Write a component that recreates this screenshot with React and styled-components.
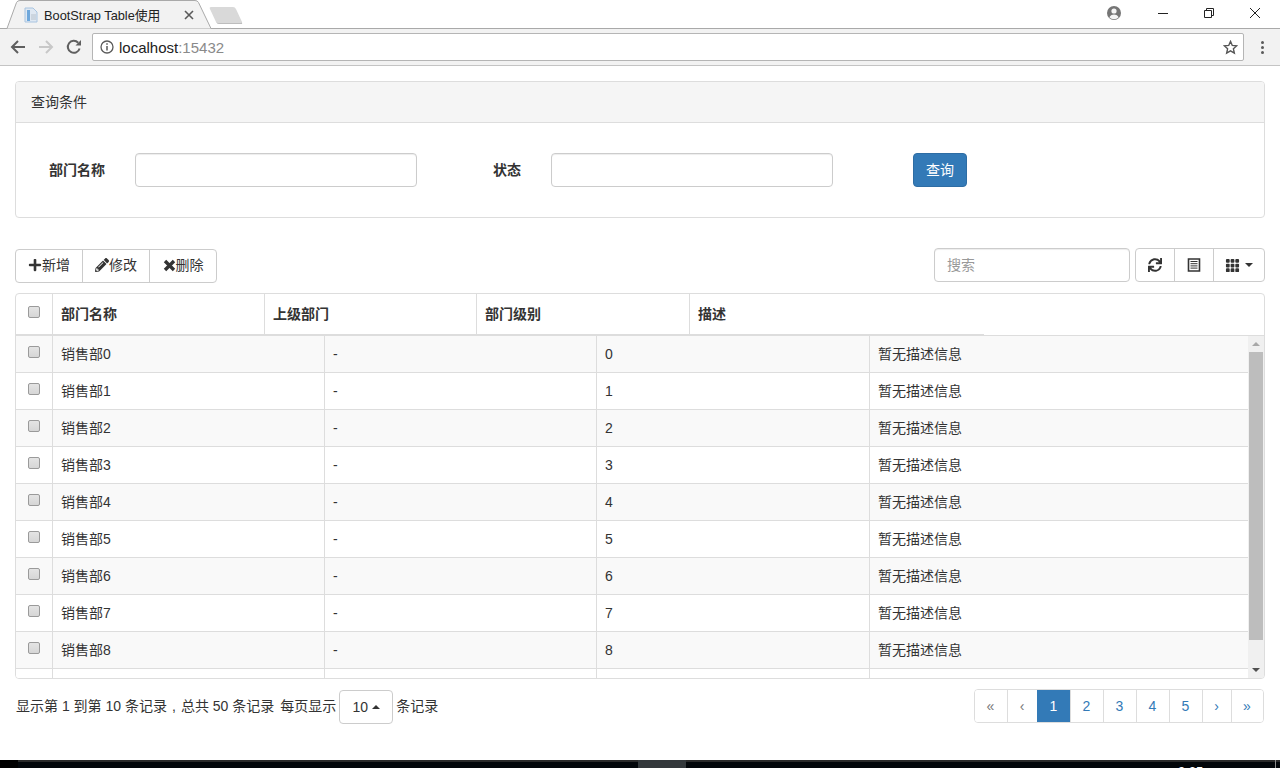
import styled, { createGlobalStyle } from "styled-components";
import { FaPlus, FaPencilAlt, FaSync } from "react-icons/fa";
import { BsGrid3X3GapFill } from "react-icons/bs";

const rows = [0, 1, 2, 3, 4, 5, 6, 7, 8];
const pages = [
  { label: "«", width: 32, disabled: true },
  { label: "‹", width: 30, disabled: true },
  { label: "1", width: 33, active: true },
  { label: "2", width: 33 },
  { label: "3", width: 33 },
  { label: "4", width: 33 },
  { label: "5", width: 33 },
  { label: "›", width: 29 },
  { label: "»", width: 32 },
];

export default function App() {
  return (
    <Screen>
      <GlobalStyle />
      <TabStrip>
        <Tab>
          <TabShape viewBox="0 0 206 29" preserveAspectRatio="none">
            <path d="M0 28.5 H2 L11.500 2.500 Q12.500 .5 15 .5 H190 Q192.500 .5 193.500 2.500 L206 28.5" fill="#f2f2f2" stroke="#a9a9a9" />
          </TabShape>
          <svg width="16" height="16" viewBox="0 0 16 16">
            <path d="M2 1h8l4 4v10H2z" fill="#dfe8f2" stroke="#a8c4e0" />
            <path d="M4 3h3v11H4z" fill="#6fa8dc" />
            <path d="M8 8h5M8 10h5M8 12h5" stroke="#b8c2cc" />
          </svg>
          <TabTitle>BootStrap Table使用</TabTitle>
          <svg width="10" height="10" viewBox="0 0 10 10">
            <path d="M1 1l8 8M9 1l-8 8" stroke="#5a5a5a" strokeWidth="1.6" />
          </svg>
        </Tab>
        <NewTab />
        <Spacer />
        <WindowControls>
          <svg width="16" height="16" viewBox="0 0 16 16">
            <circle cx="8" cy="8" r="7" fill="#757575" />
            <circle cx="8" cy="6" r="2.6" fill="#f5f5f5" />
            <path d="M3.4 12.2c1-2 3-2.7 4.6-2.7s3.6.7 4.6 2.7c-1.1 1.3-2.8 2-4.6 2s-3.500-.7-4.600-2z" fill="#f5f5f5" />
          </svg>
          <WindowButton>
            <svg width="10" height="10" viewBox="0 0 10 10"><path d="M0 5.500h10" stroke="#222" /></svg>
          </WindowButton>
          <WindowButton>
            <svg width="10" height="10" viewBox="0 0 10 10">
              <path d="M.5 2.500h7v7h-7zM2.500 2.500v-2h7v7h-2" fill="none" stroke="#222" />
            </svg>
          </WindowButton>
          <WindowButton>
            <svg width="10" height="10" viewBox="0 0 10 10"><path d="M0 0l10 10M10 0L0 10" stroke="#222" /></svg>
          </WindowButton>
        </WindowControls>
      </TabStrip>

      <AddressBar>
        <NavIcon>
          <svg width="16" height="16" viewBox="0 0 16 16">
            <path d="M15 8H2M8 2L2 8l6 6" fill="none" stroke="#5f5f5f" strokeWidth="2" />
          </svg>
        </NavIcon>
        <NavIcon>
          <svg width="16" height="16" viewBox="0 0 16 16">
            <path d="M1 8h13M8 2l6 6-6 6" fill="none" stroke="#c8c8c8" strokeWidth="2" />
          </svg>
        </NavIcon>
        <NavIcon>
          <svg width="16" height="16" viewBox="0 0 16 16">
            <path d="M13.600 9.500A6 6 0 1 1 12.200 3.700" fill="none" stroke="#5f5f5f" strokeWidth="2" />
            <path d="M9.500 6.500H15V1z" fill="#5f5f5f" />
          </svg>
        </NavIcon>
        <Omnibox>
          <svg width="14" height="14" viewBox="0 0 14 14">
            <circle cx="7" cy="7" r="6" fill="none" stroke="#5a5a5a" strokeWidth="1.300" />
            <path d="M7 6v4.500M7 3.200v1.600" stroke="#5a5a5a" strokeWidth="1.500" />
          </svg>
          <Url>
            localhost<UrlPort>:15432</UrlPort>
          </Url>
          <Spacer />
          <svg width="15" height="15" viewBox="0 0 16 16">
            <path d="M8 1.500l1.900 4.300 4.600.5-3.400 3.100 1 4.600L8 11.600l-4.100 2.400 1-4.600L1.500 6.300l4.600-.5z" fill="none" stroke="#555" strokeWidth="1.500" />
          </svg>
        </Omnibox>
        <MenuDots>
          <i />
          <i />
          <i />
        </MenuDots>
      </AddressBar>

      <Page>
        <Panel>
          <PanelHeading>查询条件</PanelHeading>
          <QueryForm>
            <Field>
              <FieldLabel $width={56}>部门名称</FieldLabel>
              <TextInput />
            </Field>
            <Field>
              <FieldLabel $width={28}>状态</FieldLabel>
              <TextInput />
            </Field>
            <QueryButton>查询</QueryButton>
          </QueryForm>
        </Panel>

        <Toolbar>
          <ActionGroup>
            <ToolButton $width={66}>
              <FaPlus size={14} />
              <ToolLabel>新增</ToolLabel>
            </ToolButton>
            <ToolButton $width={67}>
              <FaPencilAlt size={14} />
              <ToolLabel>修改</ToolLabel>
            </ToolButton>
            <ToolButton $width={67}>
              <svg width="13" height="13" viewBox="0 0 13 13">
                <path d="M2 2l9 9M11 2l-9 9" stroke="#333" strokeWidth="3.400" />
              </svg>
              <ToolLabel>删除</ToolLabel>
            </ToolButton>
          </ActionGroup>
          <ToolbarRight>
            <SearchInput placeholder="搜索" />
            <ButtonGroup>
              <ToolButton $width={38}><FaSync size={14} /></ToolButton>
              <ToolButton $width={39}>
                <svg width="14" height="14" viewBox="0 0 14 14">
                  <path d="M1.500 1h11v12h-11z" fill="none" stroke="#333" strokeWidth="1.600" />
                  <path d="M3.500 3.500h7M3.500 5.700h7M3.500 7.900h7M3.500 10.100h7" stroke="#333" />
                </svg>
              </ToolButton>
              <ToolButton $width={51}>
                <BsGrid3X3GapFill size={15} />
                <Caret />
              </ToolButton>
            </ButtonGroup>
          </ToolbarRight>
        </Toolbar>

        <TableBox>
          <HeadRow>
            <HeadCell $center><CheckBox type="checkbox" /></HeadCell>
            <HeadCell>部门名称</HeadCell>
            <HeadCell>上级部门</HeadCell>
            <HeadCell>部门级别</HeadCell>
            <HeadCell $last>描述</HeadCell>
          </HeadRow>
          <BodyWrap>
            <Rows>
              {rows.map((n) => (
                <Row key={n} $odd={n % 2 === 0}>
                  <Cell $center><CheckBox type="checkbox" /></Cell>
                  <Cell $cjk>销售部{n}</Cell>
                  <Cell>-</Cell>
                  <Cell>{n}</Cell>
                  <Cell $cjk $last>暂无描述信息</Cell>
                </Row>
              ))}
              {/* next row, scrolled out of view except its top edge */}
              <Row>
                <Cell />
                <Cell />
                <Cell />
                <Cell />
                <Cell $last />
              </Row>
            </Rows>
            <ScrollBar>
              <ScrollArrow $up />
              <ScrollThumb />
              <ScrollArrow />
            </ScrollBar>
          </BodyWrap>
        </TableBox>

        <Footer>
          <PageInfo>
            <InfoText>
              显示第 1 到第 10 条记录<Comma>,</Comma>总共 50 条记录
            </InfoText>
            <InfoText $gap={6}>每页显示</InfoText>
            <PageSize>10<CaretUp /></PageSize>
            <InfoText>条记录</InfoText>
          </PageInfo>
          <Pagination>
            {pages.map((p) => (
              <PageLink key={p.label} $width={p.width} $active={p.active} $disabled={p.disabled}>
                {p.label}
              </PageLink>
            ))}
          </Pagination>
        </Footer>
      </Page>

      <Taskbar>
        <TaskCorner />
        <TaskSlot />
        <TaskClock>9:25</TaskClock>
        <TaskEdge />
      </Taskbar>
    </Screen>
  );
}

const GlobalStyle = createGlobalStyle`
  html, body {
    margin: 0;
    height: 100%;
    overflow: hidden;
    background: #fff;
  }
  * {
    box-sizing: border-box;
  }
  body {
    font-family: "Liberation Sans", "Noto Sans CJK SC", sans-serif;
    font-size: 14px;
    color: #333;
  }
`;

const Screen = styled.div`
  display: flex;
  flex-direction: column;
  height: 768px;
  overflow: hidden;
`;

const Spacer = styled.div`
  flex: 1;
`;

const TabStrip = styled.div`
  display: flex;
  align-items: flex-end;
  height: 29px;
  padding-left: 5px;
  background: #fff;
  border-bottom: 1px solid #a9a9a9;
`;

const Tab = styled.div`
  position: relative;
  display: flex;
  align-items: center;
  gap: 5px;
  width: 206px;
  height: 29px;
  margin-bottom: -1px;
  padding: 0 17px 0 18px;
  svg {
    position: relative;
    flex: none;
  }
`;

const TabShape = styled.svg`
  position: absolute !important;
  left: 0;
  top: 0;
  width: 206px;
  height: 29px;
`;

const TabTitle = styled.span`
  position: relative;
  flex: 1;
  font-size: 12.8px;
  color: #222;
  white-space: nowrap;
`;

const NewTab = styled.div`
  width: 26px;
  height: 17px;
  margin: 0 0 4px 2px;
  background: #d9d9d9;
  border-bottom: 1px solid #bdbdbd;
  border-radius: 2px;
  transform: skewX(25deg);
`;

const WindowControls = styled.div`
  display: flex;
  align-items: center;
  align-self: flex-start;
  height: 26px;
  padding-right: 2px;
`;

const WindowButton = styled.div`
  display: flex;
  align-items: center;
  justify-content: center;
  width: 46px;
  &:first-of-type {
    margin-left: 18px;
  }
`;

const AddressBar = styled.div`
  display: flex;
  align-items: center;
  height: 37px;
  padding: 0 10px;
  background: #f2f2f2;
  border-bottom: 1px solid #c4c4c4;
`;

const NavIcon = styled.div`
  display: flex;
  justify-content: center;
  width: 16px;
  margin-right: 12px;
  &:nth-child(3) {
    margin-right: 10px;
  }
`;

const Omnibox = styled.div`
  display: flex;
  align-items: center;
  gap: 5px;
  width: 1152px;
  height: 28px;
  padding: 0 5px 0 7px;
  background: #fff;
  border: 1px solid #b5b5b5;
  border-radius: 2px;
`;

const Url = styled.span`
  font-size: 15px;
  color: #222;
`;

const UrlPort = styled.span`
  color: #8a8a8a;
`;

const MenuDots = styled.div`
  display: flex;
  flex-direction: column;
  gap: 2px;
  margin-left: 17px;
  i {
    width: 3px;
    height: 3px;
    background: #5a5a5a;
    border-radius: 50%;
  }
`;

const Page = styled.div`
  flex: 1;
  min-height: 0;
  padding: 15px 15px 0;
`;

const Panel = styled.div`
  height: 137px;
  background: #fff;
  border: 1px solid #ddd;
  border-radius: 4px;
`;

const PanelHeading = styled.div`
  display: flex;
  align-items: center;
  height: 41px;
  padding: 0 15px 2px;
  background: #f5f5f5;
  border-bottom: 1px solid #ddd;
  border-radius: 3px 3px 0 0;
`;

const QueryForm = styled.div`
  display: flex;
  align-items: center;
  gap: 76px;
  padding: 30px 0 0 33px;
`;

const Field = styled.div`
  display: flex;
  align-items: center;
  gap: 30px;
`;

const FieldLabel = styled.label`
  width: ${(p) => p.$width}px;
  padding-bottom: 2px;
  font-weight: 700;
  white-space: nowrap;
`;

const TextInput = styled.input`
  width: 282px;
  height: 34px;
  padding: 6px 12px;
  background: #fff;
  border: 1px solid #ccc;
  border-radius: 4px;
  box-shadow: inset 0 1px 1px rgba(0, 0, 0, 0.075);
`;

const QueryButton = styled.button`
  width: 54px;
  height: 34px;
  margin-left: 4px;
  padding: 0 0 2px;
  font: inherit;
  color: #fff;
  background: #337ab7;
  border: 1px solid #2e6da4;
  border-radius: 4px;
`;

const Toolbar = styled.div`
  display: flex;
  align-items: flex-start;
  justify-content: space-between;
  height: 44px;
  margin-top: 31px;
`;

const ToolbarRight = styled.div`
  display: flex;
  gap: 5px;
  margin-top: -1px;
`;

const ButtonGroup = styled.div`
  display: flex;
  height: 34px;
  background: #fff;
  border: 1px solid #ccc;
  border-radius: 4px;
`;

const ActionGroup = styled(ButtonGroup)`
  padding: 0;
  & > div {
    padding-bottom: 2px;
  }
`;

const ToolButton = styled.div`
  display: flex;
  align-items: center;
  justify-content: center;
  width: ${(p) => p.$width}px;
  height: 100%;
  color: #333;
  border-left: 1px solid #ccc;
  &:first-child {
    border-left: 0;
  }
`;

const ToolLabel = styled.span`
  margin-bottom: 2px;
`;

const Caret = styled.span`
  width: 0;
  height: 0;
  margin-left: 5px;
  border-top: 4px solid #333;
  border-left: 4px solid transparent;
  border-right: 4px solid transparent;
`;

const CaretUp = styled.span`
  display: inline-block;
  width: 0;
  height: 0;
  margin-left: 4px;
  vertical-align: 2px;
  border-bottom: 4px solid #333;
  border-left: 4px solid transparent;
  border-right: 4px solid transparent;
`;

const SearchInput = styled.input`
  width: 196px;
  height: 34px;
  padding: 6px 12px;
  font: inherit;
  background: #fff;
  border: 1px solid #ccc;
  border-radius: 4px;
  box-shadow: inset 0 1px 1px rgba(0, 0, 0, 0.075);
  &::placeholder {
    color: #999;
  }
`;

const TableBox = styled.div`
  height: 386px;
  overflow: hidden;
  background: #fff;
  border: 1px solid #ddd;
  border-radius: 4px;
`;

const HeadRow = styled.div`
  display: grid;
  grid-template-columns: 37px 212px 212px 213px 294px;
  width: 968px;
  height: 41px;
  border-bottom: 1px solid #ddd;
`;

const HeadCell = styled.div`
  display: flex;
  align-items: center;
  justify-content: ${(p) => (p.$center ? "center" : "flex-start")};
  padding: ${(p) => (p.$center ? "0" : "0 8px 2px")};
  font-weight: 700;
  border-right: ${(p) => (p.$last ? "0" : "1px solid #ddd")};
`;

const BodyWrap = styled.div`
  display: flex;
  height: 343px;
  border-top: 1px solid #ddd;
`;

const Rows = styled.div`
  flex: 1;
  min-width: 0;
  overflow: hidden;
`;

const Row = styled.div`
  display: grid;
  grid-template-columns: 37px 272px 272px 273px 378px;
  height: 37px;
  background: ${(p) => (p.$odd ? "#f9f9f9" : "#fff")};
  border-bottom: 1px solid #ddd;
`;

const Cell = styled.div`
  display: flex;
  align-items: center;
  justify-content: ${(p) => (p.$center ? "center" : "flex-start")};
  padding: ${(p) => (p.$center ? "0" : p.$cjk ? "0 8px 2px" : "0 8px")};
  border-right: ${(p) => (p.$last ? "0" : "1px solid #ddd")};
`;

const CheckBox = styled.input`
  appearance: none;
  width: 12px;
  height: 12px;
  margin: 0 0 4px;
  background: linear-gradient(#e4e4e4, #d6d6d6);
  border: 1px solid #9a9a9a;
  border-radius: 2px;
`;

const ScrollBar = styled.div`
  display: flex;
  flex-direction: column;
  flex: none;
  width: 16px;
  padding: 0 1px;
  background: #f0f0f0;
`;

const ScrollArrow = styled.div`
  flex: none;
  height: 16px;
  margin: 0 auto;
  width: 0;
  border-left: 4px solid transparent;
  border-right: 4px solid transparent;
  ${(p) =>
    p.$up
      ? `border-bottom: 4px solid #a8a8a8; border-top: 12px solid transparent; height: 0; margin-top: -6px;`
      : `border-top: 4px solid #505050; border-bottom: 0; height: 0; margin-top: auto; margin-bottom: 6px;`}
`;

const ScrollThumb = styled.div`
  height: 288px;
  margin-top: 6px;
  background: #bdbdbd;
`;

const Footer = styled.div`
  display: flex;
  align-items: flex-start;
  justify-content: space-between;
  margin-top: 10px;
`;

const PageInfo = styled.div`
  display: flex;
  align-items: center;
  height: 36px;
  margin-left: 1px;
  white-space: pre;
`;

const InfoText = styled.span`
  margin-left: ${(p) => p.$gap || 0}px;
  padding-bottom: 4px;
`;

const Comma = styled.span`
  display: inline-block;
  width: 14px;
  text-align: center;
`;

const PageSize = styled.div`
  display: flex;
  align-items: center;
  justify-content: center;
  width: 54px;
  height: 34px;
  margin: 0 3px;
  background: #fff;
  border: 1px solid #ccc;
  border-radius: 4px;
`;

const Pagination = styled.div`
  display: flex;
  height: 34px;
  margin-right: 1px;
  overflow: hidden;
  border: 1px solid #ddd;
  border-radius: 4px;
`;

const PageLink = styled.a`
  display: flex;
  align-items: center;
  justify-content: center;
  width: ${(p) => p.$width}px;
  padding-right: 1px;
  color: ${(p) => (p.$active ? "#fff" : p.$disabled ? "#777" : "#337ab7")};
  background: ${(p) => (p.$active ? "#337ab7" : "#fff")};
  border-left: 1px solid ${(p) => (p.$active ? "#337ab7" : "#ddd")};
  &:first-child {
    border-left: 0;
  }
`;

const Taskbar = styled.div`
  display: flex;
  height: 8px;
  overflow: hidden;
  background: linear-gradient(#2a2a2a 2px, #02060a 2px);
`;

const TaskCorner = styled.div`
  width: 18px;
  background: #000;
`;

const TaskSlot = styled.div`
  width: 48px;
  margin-left: 620px;
  background: #33383b;
`;

const TaskClock = styled.div`
  margin-left: 492px;
  padding-top: 4px;
  font-size: 13px;
  line-height: 15px;
  color: #fff;
`;

const TaskEdge = styled.div`
  width: 1px;
  margin-left: auto;
  margin-right: 4px;
  background: #8a8a8a;
`;
